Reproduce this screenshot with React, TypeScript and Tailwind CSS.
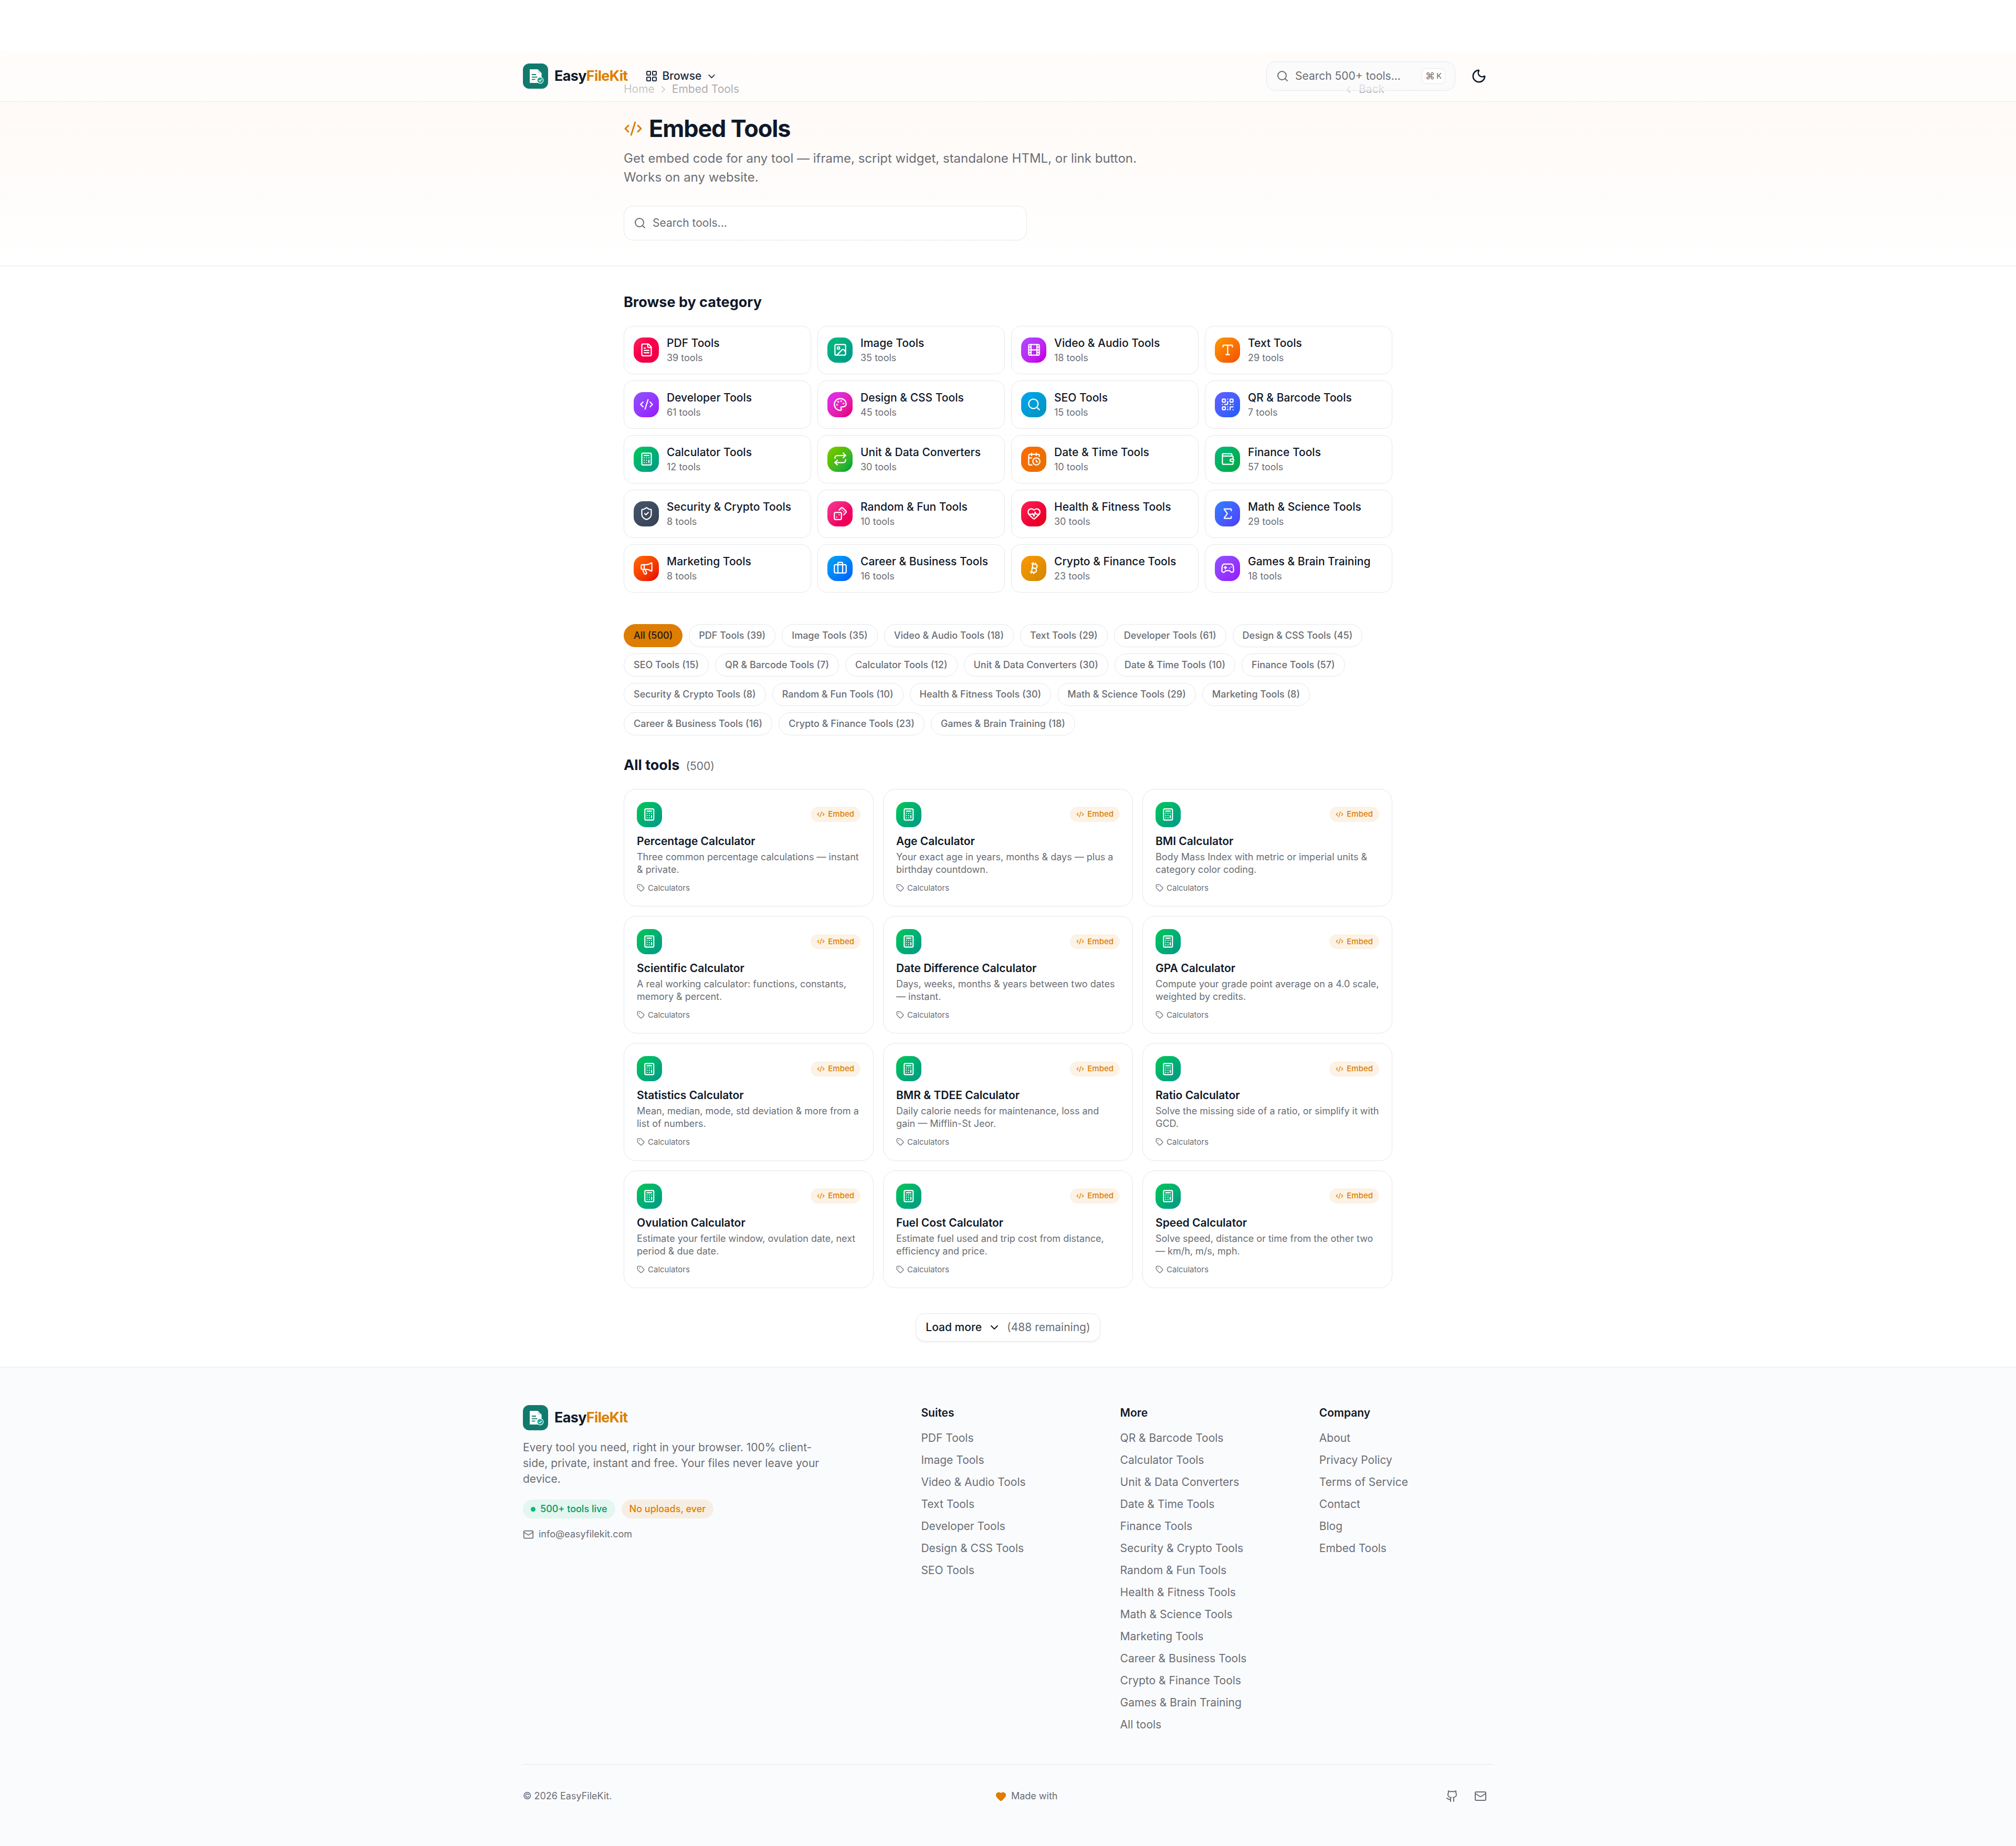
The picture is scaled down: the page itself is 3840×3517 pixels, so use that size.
import {
  Bitcoin,
  Briefcase,
  Calculator,
  CalendarClock,
  ChevronDown,
  ChevronLeft,
  ChevronRight,
  CodeXml,
  Dices,
  FileText,
  Film,
  Gamepad2,
  Github,
  Heart,
  HeartPulse,
  Image,
  LayoutGrid,
  Mail,
  Megaphone,
  Moon,
  Palette,
  QrCode,
  Repeat,
  Search,
  ShieldCheck,
  Sigma,
  Tag,
  Type,
  Wallet,
} from "lucide-react";

const categories = [
  { name: "PDF Tools", count: 39, Icon: FileText, bg: "from-rose-500 to-rose-600" },
  { name: "Image Tools", count: 35, Icon: Image, bg: "from-emerald-500 to-teal-600" },
  { name: "Video & Audio Tools", count: 18, Icon: Film, bg: "from-purple-500 to-fuchsia-600" },
  { name: "Text Tools", count: 29, Icon: Type, bg: "from-amber-500 to-orange-600" },
  { name: "Developer Tools", count: 61, Icon: CodeXml, bg: "from-violet-500 to-purple-600" },
  { name: "Design & CSS Tools", count: 45, Icon: Palette, bg: "from-fuchsia-500 to-pink-600" },
  { name: "SEO Tools", count: 15, Icon: Search, bg: "from-sky-500 to-cyan-600" },
  { name: "QR & Barcode Tools", count: 7, Icon: QrCode, bg: "from-indigo-500 to-blue-600" },
  { name: "Calculator Tools", count: 12, Icon: Calculator, bg: "from-green-500 to-teal-600" },
  { name: "Unit & Data Converters", count: 30, Icon: Repeat, bg: "from-lime-500 to-green-600" },
  { name: "Date & Time Tools", count: 10, Icon: CalendarClock, bg: "from-orange-500 to-amber-600" },
  { name: "Finance Tools", count: 57, Icon: Wallet, bg: "from-emerald-500 to-green-600" },
  { name: "Security & Crypto Tools", count: 8, Icon: ShieldCheck, bg: "from-slate-600 to-gray-700" },
  { name: "Random & Fun Tools", count: 10, Icon: Dices, bg: "from-pink-500 to-rose-600" },
  { name: "Health & Fitness Tools", count: 30, Icon: HeartPulse, bg: "from-rose-500 to-red-600" },
  { name: "Math & Science Tools", count: 29, Icon: Sigma, bg: "from-blue-500 to-indigo-600" },
  { name: "Marketing Tools", count: 8, Icon: Megaphone, bg: "from-orange-500 to-red-600" },
  { name: "Career & Business Tools", count: 16, Icon: Briefcase, bg: "from-sky-500 to-blue-600" },
  { name: "Crypto & Finance Tools", count: 23, Icon: Bitcoin, bg: "from-amber-500 to-yellow-600" },
  { name: "Games & Brain Training", count: 18, Icon: Gamepad2, bg: "from-violet-500 to-purple-600" },
];

const tools = [
  ["Percentage Calculator", "Three common percentage calculations — instant & private."],
  ["Age Calculator", "Your exact age in years, months & days — plus a birthday countdown."],
  ["BMI Calculator", "Body Mass Index with metric or imperial units & category color coding."],
  ["Scientific Calculator", "A real working calculator: functions, constants, memory & percent."],
  ["Date Difference Calculator", "Days, weeks, months & years between two dates — instant."],
  ["GPA Calculator", "Compute your grade point average on a 4.0 scale, weighted by credits."],
  ["Statistics Calculator", "Mean, median, mode, std deviation & more from a list of numbers."],
  ["BMR & TDEE Calculator", "Daily calorie needs for maintenance, loss and gain — Mifflin-St Jeor."],
  ["Ratio Calculator", "Solve the missing side of a ratio, or simplify it with GCD."],
  ["Ovulation Calculator", "Estimate your fertile window, ovulation date, next period & due date."],
  ["Fuel Cost Calculator", "Estimate fuel used and trip cost from distance, efficiency and price."],
  ["Speed Calculator", "Solve speed, distance or time from the other two — km/h, m/s, mph."],
];

const footerCols = [
  {
    title: "Suites",
    links: ["PDF Tools", "Image Tools", "Video & Audio Tools", "Text Tools", "Developer Tools", "Design & CSS Tools", "SEO Tools"],
  },
  {
    title: "More",
    links: [
      "QR & Barcode Tools",
      "Calculator Tools",
      "Unit & Data Converters",
      "Date & Time Tools",
      "Finance Tools",
      "Security & Crypto Tools",
      "Random & Fun Tools",
      "Health & Fitness Tools",
      "Math & Science Tools",
      "Marketing Tools",
      "Career & Business Tools",
      "Crypto & Finance Tools",
      "Games & Brain Training",
      "All tools",
    ],
  },
  {
    title: "Company",
    links: ["About", "Privacy Policy", "Terms of Service", "Contact", "Blog", "Embed Tools"],
  },
];

function Logo() {
  return (
    <div className="flex items-center gap-2">
      <svg width="32" height="32" viewBox="0 0 32 32" className="shrink-0">
        <rect width="32" height="32" rx="8" fill="#117a6d" />
        <path d="M8.7 7.3h10.2l4.8 4.8v12.6H8.7z" fill="#fff" />
        <path d="M18.9 7.3v4.8h4.8z" fill="#cfe6e2" />
        <path d="M11.3 14h5.4M11.3 17.3h7M11.3 20.3h4.4" stroke="#117a6d" strokeWidth="1.2" />
        <circle cx="22" cy="21.2" r="4" fill="#14a594" stroke="#fff" strokeWidth="0.8" />
        <path d="M20.2 21.2l1.3 1.3 2.4-2.6" fill="none" stroke="#fff" strokeWidth="1" />
      </svg>
      <span className="text-lg font-bold tracking-tight text-gray-900">
        Easy<span className="text-[#dd7d02]">FileKit</span>
      </span>
    </div>
  );
}

function Header() {
  return (
    <header className="absolute left-0 right-0 top-[65px] z-10 h-16 border-b border-gray-200/80 bg-gradient-to-b from-white/50 to-white/65">
      <div className="mx-auto flex h-full max-w-7xl items-center justify-between px-6">
        <div className="flex items-center">
          <Logo />
          <button className="ml-3.5 flex items-center gap-1.5 px-2 text-sm font-medium text-gray-800">
            <LayoutGrid size={16} />
            Browse
            <ChevronDown size={14} />
          </button>
        </div>
        <div className="flex items-center gap-3">
          <div className="flex h-[37px] w-60 items-center gap-2 rounded-xl border border-gray-200 bg-gray-50/60 px-3 text-sm text-[#6a6e75]">
            <Search size={16} />
            <span>Search 500+ tools...</span>
            <span className="ml-auto flex h-5 w-[30px] items-center justify-center gap-0.5 rounded-md border border-gray-200 bg-white text-[10px]">
              <span className="text-xs">⌘</span>K
            </span>
          </div>
          <button className="flex h-9 w-9 items-center justify-center text-gray-900">
            <Moon size={20} />
          </button>
        </div>
      </div>
    </header>
  );
}

function Hero() {
  return (
    <section className="border-b border-gray-200 bg-gradient-to-b from-[#fef8f4] to-white">
      <div className="mx-auto max-w-5xl px-6 pb-8 pt-[38.5px]">
        <div className="mb-[21.5px] flex items-center justify-between text-sm text-[#6a6e75]">
          <div className="flex items-center gap-1">
            <span>Home</span>
            <ChevronRight size={14} />
            <span className="text-gray-800">Embed Tools</span>
          </div>
          <div className="flex items-center gap-1.5 pr-2.5 text-gray-700">
            <ChevronLeft size={14} />
            <span>Back</span>
          </div>
        </div>
        <h1 className="flex items-center gap-2 text-3xl font-bold tracking-tight text-gray-900">
          <CodeXml size={24} className="text-[#dd7d02]" />
          Embed Tools
        </h1>
        <p className="mt-2 max-w-2xl text-base text-[#6a6e75]">
          Get embed code for any tool — iframe, script widget, standalone HTML, or link button. Works on any website.
        </p>
        <div className="mt-6 flex h-11 max-w-lg items-center gap-2 rounded-xl border border-gray-200 bg-white px-3 text-sm text-[#6a6e75]">
          <Search size={16} />
          <span>Search tools...</span>
        </div>
      </div>
    </section>
  );
}

function CategoryGrid() {
  return (
    <div className="grid grid-cols-4 gap-2">
      {categories.map(({ name, count, Icon, bg }) => (
        <div key={name} className="flex items-center gap-2.5 rounded-xl border border-gray-200 bg-white p-3">
          <div className={`flex h-8 w-8 shrink-0 items-center justify-center rounded-xl bg-gradient-to-br text-white ${bg}`}>
            <Icon size={18} />
          </div>
          <div className="min-w-0">
            <div className="text-sm font-medium leading-[18px] text-gray-900">{name}</div>
            <div className="mt-0.5 text-xs text-[#6a6e75]">{count} tools</div>
          </div>
        </div>
      ))}
    </div>
  );
}

function Pills() {
  return (
    <div className="flex flex-wrap gap-2">
      <span className="rounded-full border border-[#dd7d02] bg-[#dd7d02] px-3 py-1.5 text-xs font-medium text-stone-900">All (500)</span>
      {categories.map(({ name, count }) => (
        <span key={name} className="rounded-full border border-gray-200 bg-white px-3 py-1.5 text-xs font-medium text-[#6a6e75]">
          {name} ({count})
        </span>
      ))}
    </div>
  );
}

function ToolCard({ title, desc }: { title: string; desc: string }) {
  return (
    <div className="rounded-2xl border border-gray-200 bg-white p-4">
      <div className="mb-2 flex items-center justify-between">
        <div className="flex h-8 w-8 items-center justify-center rounded-xl bg-gradient-to-br from-green-500 to-teal-600 text-white">
          <Calculator size={17} />
        </div>
        <span className="flex items-center gap-1 rounded-full bg-[#dd7d02]/10 px-2 py-0.5 text-[10px] font-medium text-[#dd7d02]">
          <CodeXml size={10} />
          Embed
        </span>
      </div>
      <div className="text-sm font-semibold leading-5 text-gray-900">{title}</div>
      <p className="mt-0.5 text-xs text-[#6a6e75]">{desc}</p>
      <div className="mt-2 flex items-center gap-1 text-[10px] leading-[14.25px] text-[#6a6e75]">
        <Tag size={10} />
        Calculators
      </div>
    </div>
  );
}

function Footer() {
  return (
    <footer className="border-t border-gray-200 bg-[#fafbfd]">
      <div className="mx-auto max-w-7xl px-6 pb-[50px] pt-12">
        <div className="grid grid-cols-5 gap-8">
          <div className="col-span-2">
            <Logo />
            <p className="mt-3 max-w-sm text-sm text-[#6a6e75]">
              Every tool you need, right in your browser. 100% client-side, private, instant and free. Your files never leave your device.
            </p>
            <div className="mt-4 flex items-center gap-2">
              <span className="flex h-6 items-center gap-1.5 rounded-full bg-[#e3f6ef] px-2.5 text-xs font-medium text-emerald-600">
                <span className="h-1.5 w-1.5 rounded-full bg-emerald-500" />
                500+ tools live
              </span>
              <span className="flex h-6 items-center rounded-full bg-[#dd7d02]/10 px-2.5 text-xs font-medium text-[#dd7d02]">
                No uploads, ever
              </span>
            </div>
            <div className="mt-3 flex items-center gap-1.5 text-xs text-[#6a6e75]">
              <Mail size={14} />
              info@easyfilekit.com
            </div>
          </div>
          {footerCols.map((col) => (
            <div key={col.title}>
              <div className="mb-3 text-sm font-semibold text-gray-900">{col.title}</div>
              <ul className="space-y-2 text-sm text-[#6a6e75]">
                {col.links.map((link) => (
                  <li key={link}>{link}</li>
                ))}
              </ul>
            </div>
          ))}
        </div>
        <div className="mt-10 flex items-center justify-between border-t border-gray-200 pt-[26px] text-xs text-[#6a6e75]">
          <span>© 2026 EasyFileKit.</span>
          <span className="flex items-center gap-1.5">
            <Heart size={14} className="fill-[#dd7d02] text-[#dd7d02]" />
            Made with
          </span>
          <div className="flex items-center gap-2 pr-0.5">
            <span className="p-1.5">
              <Github size={16} />
            </span>
            <span className="p-1.5">
              <Mail size={16} />
            </span>
          </div>
        </div>
      </div>
    </footer>
  );
}

export default function App() {
  return (
    <div className="relative bg-white pt-[65px] [font-family:Inter,sans-serif] [zoom:1.5]">
      <Hero />
      <Header />
      <main className="mx-auto max-w-5xl px-6 py-8">
        <h2 className="mb-4 text-lg font-bold text-gray-900">Browse by category</h2>
        <CategoryGrid />
        <div className="mt-10">
          <Pills />
        </div>
        <h2 className="mb-4 mt-6 flex items-baseline gap-2 text-lg font-bold text-gray-900">
          All tools <span className="text-sm font-normal text-[#6a6e75]">(500)</span>
        </h2>
        <div className="grid grid-cols-3 gap-3">
          {tools.map(([title, desc]) => (
            <ToolCard key={title} title={title} desc={desc} />
          ))}
        </div>
        <div className="mt-8 flex justify-center">
          <button className="flex h-9 items-center gap-2 rounded-xl border border-gray-200 bg-white px-3 text-sm font-medium text-gray-900 shadow-xs">
            Load more
            <ChevronDown size={16} />
            <span className="font-normal text-[#6a6e75]">(488 remaining)</span>
          </button>
        </div>
      </main>
      <Footer />
    </div>
  );
}
